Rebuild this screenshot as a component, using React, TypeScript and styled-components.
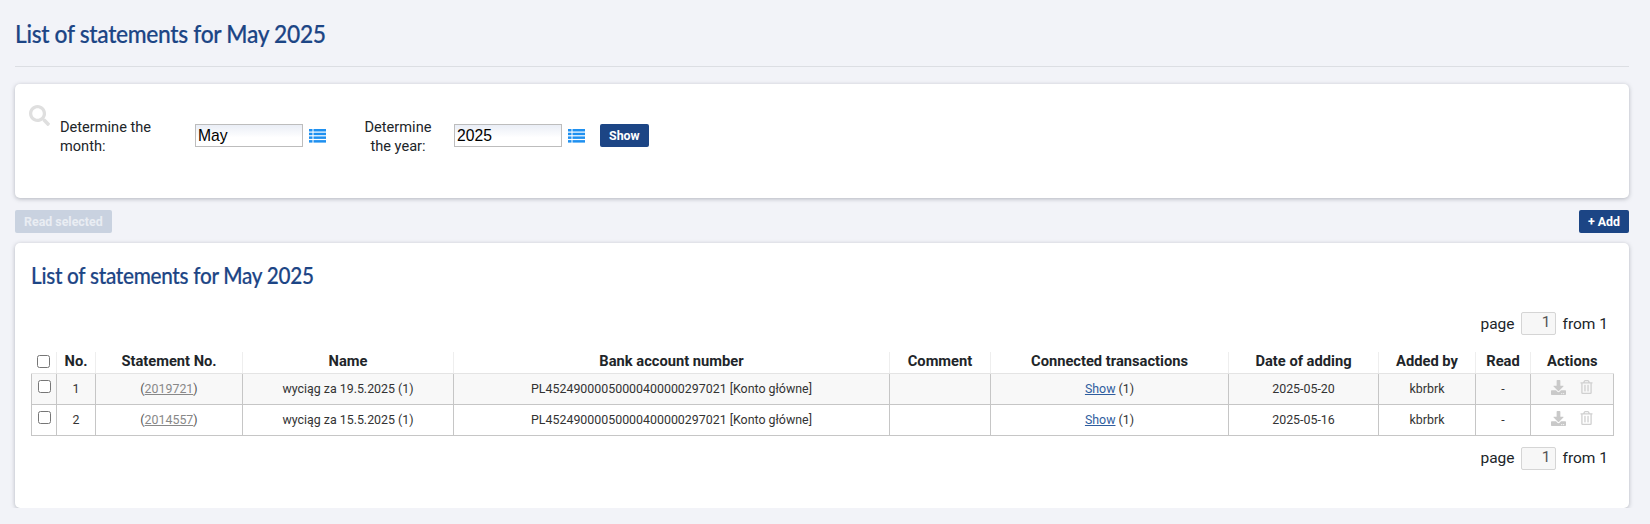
import React from "react";
import styled, { createGlobalStyle } from "styled-components";
import { FaSearch, FaDownload, FaRegTrashAlt } from "react-icons/fa";

const Global = createGlobalStyle`
  html, body { margin: 0; padding: 0; background: #f2f3f8; }
  body { font-family: Roboto, "Liberation Sans", sans-serif; color: #212529; font-size: 14px; }
`;
const Page = styled.div`
  width: 1614px;
  padding: 0 21px 0 15px;
`;
const PageHead = styled.div`
  height: 67px;
  box-sizing: border-box;
  padding-top: 18px;
  border-bottom: 1px solid #dcdee3;
`;
const Title = styled.h1`
  margin: 0;
  font-family: Lato, sans-serif;
  font-weight: 500;
  font-size: 25px;
  line-height: 30px;
  color: #1c4585;
  letter-spacing: -0.35px;
  transform-origin: left center;
  transform: scaleX(0.912);
  white-space: nowrap;
  -webkit-text-stroke: 0.2px #1c4585;
`;
const Panel = styled.section`
  background: #fff;
  border-radius: 5px;
  box-shadow: 0 1px 4px rgba(60, 65, 80, 0.35);
`;
const FilterPanel = styled(Panel)`
  margin-top: 17px;
  height: 114px;
  position: relative;
  display: flex;
  align-items: flex-start;
  padding: 40px 0 0 45px;
  box-sizing: border-box;
`;
const SearchMark = styled(FaSearch)`
  position: absolute;
  left: 14px;
  top: 21px;
  width: 21px;
  height: 21px;
  color: #dfdfdf;
`;
const FieldLabel = styled.label<{ $width: number; $center?: boolean }>`
  width: ${(p) => p.$width}px;
  margin-top: -6px;
  font-size: 14.6px;
  line-height: 19px;
  text-align: ${(p) => (p.$center ? "center" : "left")};
  color: #212529;
`;
const TextInput = styled.input`
  box-sizing: border-box;
  width: 108px;
  height: 23px;
  border: 1px solid #bdbdbd;
  padding: 0 3px 0 2px;
  font: 15.7px "Liberation Sans", sans-serif;
  color: #000;
  background: linear-gradient(#eaeef6, #fff 60%);
  outline: none;
`;
const ListIcon = styled.svg`
  width: 17px;
  height: 14px;
  margin: 5px 0 0 6px;
  flex: none;
`;
const Spacer = styled.div<{ $w: number }>`
  width: ${(p) => p.$w}px;
  flex: none;
`;
const Btn = styled.button<{ $disabled?: boolean }>`
  height: 23px;
  box-sizing: border-box;
  border: 0;
  border-radius: 2px;
  padding: 0 9px;
  font: 700 12.4px Roboto, sans-serif;
  color: ${(p) => (p.$disabled ? "#e9edf3" : "#fff")};
  background: ${(p) => (p.$disabled ? "#c9d2e0" : "#1c4585")};
`;
const ButtonBar = styled.div`
  display: flex;
  justify-content: space-between;
  margin-top: 12px;
`;
const ListPanel = styled(Panel)`
  margin-top: 10px;
  height: 265px;
  box-sizing: border-box;
  padding: 18px 16px 0 16px;
`;
const SubTitle = styled.h2`
  margin: 0;
  font-family: Lato, sans-serif;
  font-weight: 500;
  font-size: 23px;
  line-height: 28px;
  color: #1c4585;
  letter-spacing: -0.3px;
  transform-origin: left center;
  transform: scaleX(0.9);
  white-space: nowrap;
  -webkit-text-stroke: 0.2px #1c4585;
`;
const Pager = styled.div<{ $top: number }>`
  display: flex;
  justify-content: flex-end;
  align-items: center;
  gap: 6px;
  margin-top: ${(p) => p.$top}px;
  height: 23px;
  padding-right: 5px;
  font-size: 15.5px;
`;
const PageInput = styled.input`
  box-sizing: border-box;
  width: 35px;
  height: 23px;
  border: 1px solid #d5d5d5;
  border-radius: 2px;
  background: #f7f7f7;
  text-align: right;
  padding: 0 4px 3px 0;
  margin-right: 1px;
  font: 15.5px Roboto, sans-serif;
  color: #555;
`;
const Table = styled.table`
  border-collapse: collapse;
  table-layout: fixed;
  width: 1583px;
  margin-top: 17px;
  font-size: 12.4px;
`;
const Th = styled.th`
  height: 21px;
  padding: 0 0 2px;
  box-sizing: border-box;
  font-size: 14.7px;
  font-weight: 700;
  color: #212529;
  text-align: center;
  border-left: 1px solid #eeeeee;
  border-bottom: 1px solid #e4e4e4;
  &:first-child { border-left: 0; }
`;
const Row = styled.tr<{ $odd?: boolean }>`
  background: ${(p) => (p.$odd ? "#f8f8f8" : "#fff")};
`;
const Td = styled.td`
  height: 30px;
  padding: 0;
  text-align: center;
  color: #333;
  border: 1px solid #c6c6c6;
`;
const Check = styled.input`
  display: block;
  margin: -4px auto 0;
`;
const HeadCheck = styled(Check)`
  margin: 0 auto;
`;
const Muted = styled.span`
  color: #555;
`;
const GrayLink = styled.a`
  color: #888;
  text-decoration: underline;
`;
const BlueLink = styled.a`
  color: #2f5d9e;
  text-decoration: underline;
`;
const Actions = styled.div`
  display: flex;
  justify-content: center;
  align-items: center;
  gap: 13px;
  margin-top: -3px;
  padding-right: 2px;
`;
const DownloadIcon = styled(FaDownload)`
  width: 17px;
  height: 15px;
  color: #c9c9c9;
`;
const TrashIcon = styled(FaRegTrashAlt)`
  width: 13px;
  height: 14px;
  color: #d0d0d0;
`;

const ListGlyph = () => (
  <ListIcon viewBox="0 0 17 14" fill="#1e90f0">
    <rect x="0" y="0" width="3.5" height="2.5" />
    <rect x="4.5" y="0" width="12.5" height="2.5" />
    <rect x="0" y="3.7" width="3.5" height="2.5" />
    <rect x="4.5" y="3.7" width="12.5" height="2.5" />
    <rect x="0" y="7.4" width="3.5" height="2.5" />
    <rect x="4.5" y="7.4" width="12.5" height="2.5" />
    <rect x="0" y="11.1" width="3.5" height="2.5" />
    <rect x="4.5" y="11.1" width="12.5" height="2.5" />
  </ListIcon>
);

const widths = [25, 39, 147, 211, 436, 101, 238, 150, 97, 55, 83];
const headers = ["No.", "Statement No.", "Name", "Bank account number", "Comment", "Connected transactions", "Date of adding", "Added by", "Read", "Actions"];
const rows = [
  { no: 1, st: "2019721", name: "wyciąg za 19.5.2025 (1)", date: "2025-05-20" },
  { no: 2, st: "2014557", name: "wyciąg za 15.5.2025 (1)", date: "2025-05-16" },
];

const PagerRow = ({ top }: { top: number }) => (
  <Pager $top={top}>
    <span>page</span>
    <PageInput defaultValue="1" />
    <span>from 1</span>
  </Pager>
);

export default function App() {
  return (
    <Page>
      <Global />
      <PageHead>
        <Title>List of statements for May 2025</Title>
      </PageHead>
      <FilterPanel>
        <SearchMark />
        <FieldLabel $width={135}>Determine the month:</FieldLabel>
        <TextInput defaultValue="May" />
        <ListGlyph />
        <Spacer $w={37} />
        <FieldLabel $width={70} $center>Determine the year:</FieldLabel>
        <Spacer $w={21} />
        <TextInput defaultValue="2025" />
        <ListGlyph />
        <Spacer $w={15} />
        <Btn>Show</Btn>
      </FilterPanel>
      <ButtonBar>
        <Btn $disabled>Read selected</Btn>
        <Btn>+ Add</Btn>
      </ButtonBar>
      <ListPanel>
        <SubTitle>List of statements for May 2025</SubTitle>
        <PagerRow top={23} />
        <Table>
          <colgroup>
            {widths.map((w, i) => (
              <col key={i} style={{ width: w }} />
            ))}
          </colgroup>
          <thead>
            <tr>
              <Th><HeadCheck type="checkbox" /></Th>
              {headers.map((h) => (
                <Th key={h}>{h}</Th>
              ))}
            </tr>
          </thead>
          <tbody>
            {rows.map((r) => (
              <Row key={r.no} $odd={r.no === 1}>
                <Td><Check type="checkbox" /></Td>
                <Td>{r.no}</Td>
                <Td><Muted>(<GrayLink href="#">{r.st}</GrayLink>)</Muted></Td>
                <Td>{r.name}</Td>
                <Td>PL45249000050000400000297021 [Konto główne]</Td>
                <Td />
                <Td><BlueLink href="#">Show</BlueLink> (1)</Td>
                <Td>{r.date}</Td>
                <Td>kbrbrk</Td>
                <Td>-</Td>
                <Td>
                  <Actions>
                    <DownloadIcon />
                    <TrashIcon />
                  </Actions>
                </Td>
              </Row>
            ))}
          </tbody>
        </Table>
        <PagerRow top={11} />
      </ListPanel>
    </Page>
  );
}
